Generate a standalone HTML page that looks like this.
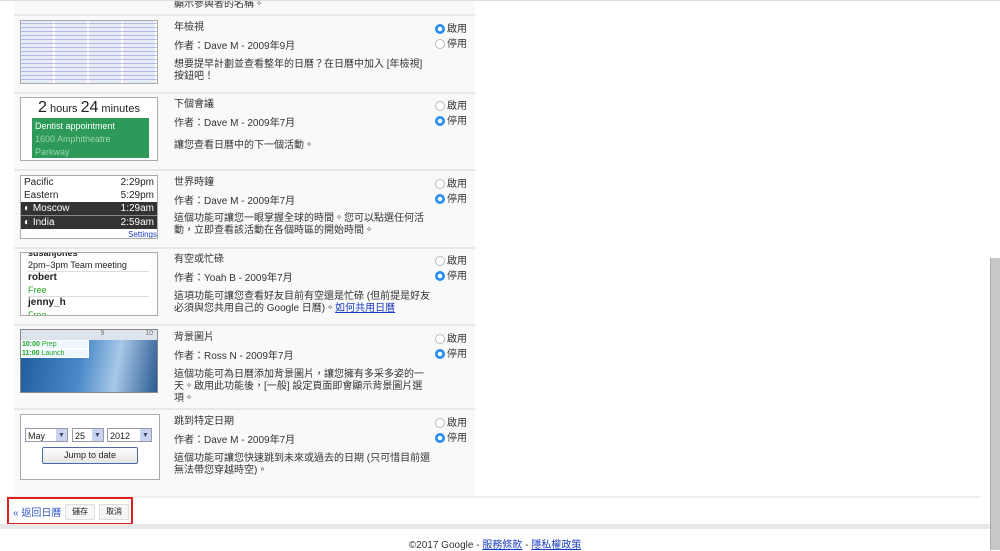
<!DOCTYPE html>
<html><head><meta charset="utf-8"><style>
body{margin:0;width:1000px;height:550px;overflow:hidden;background:#fff;font-family:"Liberation Sans","Noto Sans CJK TC",sans-serif;font-size:10px;color:#222;position:relative}
.a{position:absolute}
.bg{left:14px;top:0;width:461px;height:496px;background:#f9f9f9}
.sep{left:14px;width:461px;height:2px;background:#e8e8e8}
.th{left:20px;width:136px;height:62px;border:1px solid #aaa;background:#fff;overflow:hidden}
.t{left:174px;font-size:10px;color:#333}
.r{left:435px;font-size:10px;color:#333}
.rad{display:inline-block;width:10px;height:10px;border-radius:50%;border:1px solid #bbb;background:#fff;vertical-align:-2px;margin-right:2px;box-sizing:border-box}
.on{background:radial-gradient(circle,#fff 0 2px,#2a8ef0 2.5px);border-color:#2a8ef0}
a{color:#1a3dc1}
</style></head><body>
<div class="a bg"></div>
<div class="a t" style="top:-5px">顯示參與者的名稱。</div>
<div class="a" style="left:0;top:0;width:1000px;height:1px;background:#ddd"></div>

<div class="a sep" style="top:14px"></div>
<div class="a th" style="top:20px;background:repeating-linear-gradient(90deg,#e8ecf8 0 32px,#fff 32px 34px),#eef;"><div style="width:100%;height:100%;background:repeating-linear-gradient(0deg,transparent 0 3px,rgba(80,90,180,.35) 3px 4px)"></div></div>
<div class="a t" style="top:18px">年檢視</div>
<div class="a t" style="top:37px">作者：Dave M - 2009年9月</div>
<div class="a t" style="top:59px;line-height:12px">想要提早計劃並查看整年的日曆？在日曆中加入 [年檢視]<br>按鈕吧！</div>
<div class="a r" style="top:20px"><span class="rad on"></span>啟用</div>
<div class="a r" style="top:35px"><span class="rad"></span>停用</div>

<div class="a sep" style="top:92px"></div>
<div class="a th" style="top:97px"><div style="text-align:center;font-size:11px;margin-top:1px"><span style="font-size:16px">2</span> hours <span style="font-size:16px">24</span> minutes</div><div style="position:absolute;left:11px;top:20px;width:117px;height:40px;background:#2e9a5a;color:#fff;font-size:9px;padding:2px 3px;box-sizing:border-box;line-height:13px">Dentist appointment<br><span style="color:#9dd3ad">1600 Amphitheatre<br>Parkway</span></div></div>
<div class="a t" style="top:95px">下個會議</div>
<div class="a t" style="top:114px">作者：Dave M - 2009年7月</div>
<div class="a t" style="top:136px">讓您查看日曆中的下一個活動。</div>
<div class="a r" style="top:97px"><span class="rad"></span>啟用</div>
<div class="a r" style="top:112px"><span class="rad on"></span>停用</div>

<div class="a sep" style="top:169px"></div>
<div class="a th" style="top:175px;font-size:10px;line-height:13px">
<div style="padding:0 3px;display:flex;justify-content:space-between"><span>Pacific</span><span>2:29pm</span></div>
<div style="padding:0 3px;display:flex;justify-content:space-between"><span>Eastern</span><span>5:29pm</span></div>
<div style="padding:0 3px;display:flex;justify-content:space-between;background:#333;color:#fff;border-bottom:1px solid #888"><span>◐ Moscow</span><span>1:29am</span></div>
<div style="padding:0 3px;display:flex;justify-content:space-between;background:#333;color:#fff"><span>◐ India</span><span>2:59am</span></div>
<div style="text-align:right;font-size:8px;line-height:11px"><a>Settings</a></div></div>
<div class="a t" style="top:173px">世界時鐘</div>
<div class="a t" style="top:192px">作者：Dave M - 2009年7月</div>
<div class="a t" style="top:213px;line-height:12px">這個功能可讓您一眼掌握全球的時間。您可以點選任何活<br>動，立即查看該活動在各個時區的開始時間。</div>
<div class="a r" style="top:175px"><span class="rad"></span>啟用</div>
<div class="a r" style="top:190px"><span class="rad on"></span>停用</div>

<div class="a sep" style="top:247px"></div>
<div class="a th" style="top:252px;font-size:9px;line-height:12px;padding-left:7px;box-sizing:border-box;width:138px;height:64px">
<div style="margin-top:-6px;font-weight:bold">susanjones</div><div>2pm–3pm Team meeting</div>
<div style="border-top:1px solid #ddd;margin-right:8px;font-weight:bold;font-size:10px">robert</div><div style="color:#2a2">Free</div>
<div style="border-top:1px solid #ddd;margin-right:8px;font-weight:bold;font-size:10px">jenny_h</div><div style="color:#2a2">Free</div></div>
<div class="a t" style="top:250px">有空或忙碌</div>
<div class="a t" style="top:269px">作者：Yoah B - 2009年7月</div>
<div class="a t" style="top:291px;line-height:12px">這項功能可讓您查看好友目前有空還是忙碌 (但前提是好友<br>必須與您共用自己的 Google 日曆)。<a style="text-decoration:underline">如何共用日曆</a></div>
<div class="a r" style="top:252px"><span class="rad"></span>啟用</div>
<div class="a r" style="top:267px"><span class="rad on"></span>停用</div>

<div class="a sep" style="top:324px"></div>
<div class="a th" style="top:329px;border-color:#888;background:linear-gradient(100deg,#1e5a9a,#4a8ac8 45%,#a8c8e8 70%,#2a5a90);font-size:7px">
<div style="height:10px;background:#dde4ec;color:#777;text-align:right;padding-right:4px">9 &nbsp;&nbsp;&nbsp;&nbsp;&nbsp;&nbsp;&nbsp;&nbsp;&nbsp;&nbsp;&nbsp;&nbsp;&nbsp;&nbsp;&nbsp;&nbsp;&nbsp;&nbsp;&nbsp; 10</div>
<div style="width:66px;background:#eef6ff;color:#2a2;border:1px solid #fff;line-height:7px"><b>10:00</b> Prep</div>
<div style="width:66px;background:#eef6ff;color:#2a2;border:1px solid #fff;line-height:7px"><b>11:00</b> Launch</div></div>
<div class="a t" style="top:328px">背景圖片</div>
<div class="a t" style="top:347px">作者：Ross N - 2009年7月</div>
<div class="a t" style="top:369px;line-height:12px">這個功能可為日曆添加背景圖片，讓您擁有多采多姿的一<br>天。啟用此功能後，[一般] 設定頁面即會顯示背景圖片選<br>項。</div>
<div class="a r" style="top:330px"><span class="rad"></span>啟用</div>
<div class="a r" style="top:345px"><span class="rad on"></span>停用</div>

<div class="a sep" style="top:408px"></div>
<div class="a th" style="top:414px;width:138px;height:64px">
<div style="position:absolute;left:4px;top:13px;width:43px;height:14px;border:1px solid #99a;font-size:9px;line-height:14px;padding-left:2px;box-sizing:border-box;background:#fff">May<span style="position:absolute;right:0;top:0;width:11px;height:12px;background:#c8d4f0;color:#446;font-size:7px;text-align:center">▼</span></div>
<div style="position:absolute;left:51px;top:13px;width:32px;height:14px;border:1px solid #99a;font-size:9px;line-height:14px;padding-left:2px;box-sizing:border-box">25<span style="position:absolute;right:0;top:0;width:11px;height:12px;background:#c8d4f0;color:#446;font-size:7px;text-align:center">▼</span></div>
<div style="position:absolute;left:86px;top:13px;width:45px;height:14px;border:1px solid #99a;font-size:9px;line-height:14px;padding-left:2px;box-sizing:border-box">2012<span style="position:absolute;right:0;top:0;width:11px;height:12px;background:#c8d4f0;color:#446;font-size:7px;text-align:center">▼</span></div>
<div style="position:absolute;left:21px;top:32px;width:94px;height:15px;border:1px solid #4a6aa8;border-radius:2px;background:linear-gradient(#fff,#e4e4e4);font-size:9px;text-align:center;line-height:15px">Jump to date</div></div>
<div class="a t" style="top:412px">跳到特定日期</div>
<div class="a t" style="top:431px">作者：Dave M - 2009年7月</div>
<div class="a t" style="top:453px;line-height:12px">這個功能可讓您快速跳到未來或過去的日期 (只可惜目前還<br>無法帶您穿越時空)。</div>
<div class="a r" style="top:414px"><span class="rad"></span>啟用</div>
<div class="a r" style="top:429px"><span class="rad on"></span>停用</div>

<div class="a" style="left:7px;top:496px;width:973px;height:2px;background:#eee"></div>
<div class="a" style="left:7px;top:497px;width:126px;height:28px;border:2px solid #e02020;box-sizing:border-box"></div>
<div class="a" style="left:13px;top:504px;color:#3355cc;font-size:10px">« 返回日曆</div>
<div class="a" style="left:65px;top:504px;width:28px;height:14px;border:1px solid #ddd;border-radius:2px;background:#f6f6f6;font-size:8px;text-align:center;line-height:14px">儲存</div>
<div class="a" style="left:99px;top:504px;width:28px;height:14px;border:1px solid #ddd;border-radius:2px;background:#f6f6f6;font-size:8px;text-align:center;line-height:14px">取消</div>
<div class="a" style="left:0;top:524px;width:990px;height:5px;background:#e8e8e8"></div>
<div class="a" style="left:0;top:536px;width:990px;text-align:center;font-size:10px;color:#333">©2017 Google - <a style="text-decoration:underline">服務條款</a> - <a style="text-decoration:underline">隱私權政策</a></div>
<div class="a" style="left:990px;top:258px;width:10px;height:292px;background:#c8c8c8;border-left:1px solid #aaa"></div>
</body></html>
